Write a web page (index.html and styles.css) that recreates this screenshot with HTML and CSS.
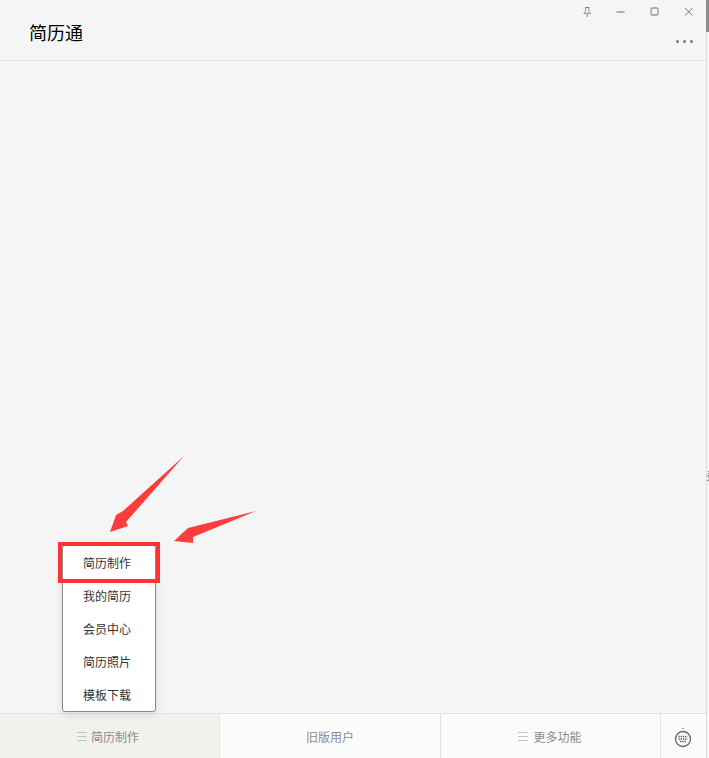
FILE: index.html
```html
<!DOCTYPE html>
<html lang="zh-CN">
<head>
    <meta charset="UTF-8">
    <title>简历通</title>
    <link rel="stylesheet" href="styles.css">
</head>
<body>
    <div class="window">
        <div class="win-controls">
            <svg class="win-icon" viewBox="0 0 12 12"><path d="M4 1.500h4.500M4.800 1.500l-.4 4.200-1.600 1.600h6.900L8.100 5.700 7.700 1.500M6.250 7.300V11" fill="none" stroke="#8a8a8a"/></svg>
            <svg class="win-icon" viewBox="0 0 12 12"><path d="M1.500 6h8" fill="none" stroke="#999" stroke-width="1.500"/></svg>
            <svg class="win-icon" viewBox="0 0 12 12"><rect x="2" y="2" width="7" height="7" rx="1.200" fill="none" stroke="#999" stroke-width="1.300"/></svg>
            <svg class="win-icon" viewBox="0 0 12 12"><path d="M2 2l7.500 7.500M9.500 2L2 9.500" fill="none" stroke="#777"/></svg>
        </div>
        <div class="header">
            <h1>简历通</h1>
            <div class="more"><span></span><span></span><span></span></div>
        </div>
        <div class="content"></div>
        <div class="footer">
            <div class="tab tab-active"><i class="burger"></i>简历制作</div>
            <div class="tab">旧版用户</div>
            <div class="tab tab-more"><i class="burger"></i>更多功能</div>
            <div class="tab-keyboard">
                <svg class="kb-icon" viewBox="0 0 18 22">
                    <circle cx="9" cy="1.500" r=".8" fill="#777"/>
                    <circle cx="9" cy="12" r="7.500" fill="none" stroke="#666" stroke-width="1.300"/>
                    <path d="M4.500 9.500h9M4.500 12h9M6 14.500h6" fill="none" stroke="#555" stroke-width="1.300" stroke-dasharray="1.300 .9"/>
                </svg>
            </div>
        </div>
        <ul class="menu">
            <li>简历制作</li>
            <li>我的简历</li>
            <li>会员中心</li>
            <li>简历照片</li>
            <li>模板下载</li>
        </ul>
    </div>
    <div class="side-strip">
        <div class="side-thumb"></div>
        <span class="side-char">录</span>
    </div>

    <!-- red marks drawn over the screenshot -->
    <div class="mark-box"></div>
    <svg class="marks" viewBox="0 0 709 758">
        <polygon points="184,456 123,511 116,515 110,532 128,526 126,522" fill="#ff3b3b"/>
        <polygon points="256,511 188,528 174,541 193,543 193,537" fill="#ff3b3b"/>
    </svg>
</body>
</html>
```

FILE: styles.css
```css
html, body {
    margin: 0;
    padding: 0;
    height: 100%;
}
body {
    display: flex;
    overflow: hidden;
    background: #f5f5f5;
    font-family: "Liberation Sans", "Noto Sans CJK SC", sans-serif;
}
.window {
    flex: 1;
    display: flex;
    flex-direction: column;
    position: relative;
    min-width: 0;
}
.win-controls {
    position: absolute;
    top: 6px;
    right: 0;
    display: flex;
    gap: 22px;
    padding-right: 11px;
}
.win-icon {
    width: 12px;
    height: 12px;
}
.header {
    height: 60px;
    flex: none;
    display: flex;
    justify-content: space-between;
    border-bottom: 1px solid #e3e3e3;
}
.header h1 {
    margin: 0;
    padding: 22px 0 0 29px;
    font-size: 18px;
    line-height: 24px;
    font-weight: normal;
    color: #000;
}
.more {
    display: flex;
    gap: 4px;
    padding: 40px 13px 0 0;
}
.more span {
    width: 3px;
    height: 3px;
    border-radius: 50%;
    background: #7a7a7a;
}
.content {
    flex: 1;
}
.footer {
    height: 44px;
    flex: none;
    display: grid;
    grid-template-columns: 220px 221px 220px 1fr;
    border-top: 1px solid #e3e3e3;
    background: #fbfbfb;
}
.tab {
    display: flex;
    align-items: center;
    justify-content: center;
    border-right: 1px solid #e3e3e3;
    font-size: 12px;
    color: #8a8a8a;
}
.tab-active {
    background: #f2f2ed;
    padding-right: 3px;
}
.tab-active .burger {
    margin-right: 4px;
}
.tab-more {
    padding-right: 1px;
}
.tab-keyboard {
    display: flex;
    align-items: center;
    justify-content: center;
    padding: 4px 2px 0 0;
}
.kb-icon {
    width: 18px;
    height: 22px;
}
.burger {
    width: 10px;
    height: 7px;
    margin-right: 5px;
    border-top: 1px solid #c4c4c4;
    border-bottom: 1px solid #c4c4c4;
    background: linear-gradient(#c4c4c4, #c4c4c4) center / 100% 1px no-repeat;
}
.menu {
    position: absolute;
    left: 62px;
    bottom: 46px;
    width: 92px;
    margin: 0;
    padding: 0;
    list-style: none;
    background: #fff;
    border: 1px solid #888;
    border-radius: 3px;
    box-shadow: 0 2px 8px rgba(0, 0, 0, 0.12);
}
.menu li {
    height: 33px;
    line-height: 37px;
    padding-right: 4px;
    box-sizing: border-box;
    text-align: center;
    font-size: 12px;
    color: #333;
}
.side-strip {
    width: 2px;
    flex: none;
    position: relative;
    border-left: 1px solid #dcdcdc;
    background: #f5f5f5;
}
.side-thumb {
    height: 32px;
    margin-left: -1px;
    background: #8c8c8c;
}
.side-char {
    position: absolute;
    top: 470px;
    left: -1px;
    font-size: 12px;
    line-height: 14px;
    color: #777;
}
.mark-box {
    position: absolute;
    left: 58px;
    top: 542px;
    width: 94px;
    height: 33px;
    border: 4px solid #ff3333;
}
.marks {
    position: absolute;
    left: 0;
    top: 0;
    width: 709px;
    height: 758px;
    pointer-events: none;
}
```
